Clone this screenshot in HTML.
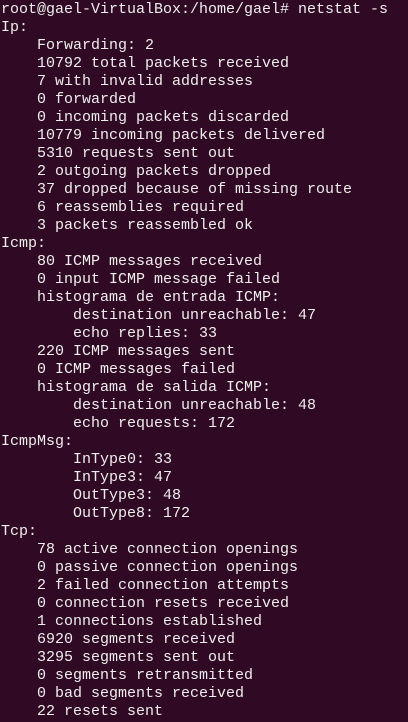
<!DOCTYPE html>
<html><head><style>
html,body{margin:0;padding:0;background:#300a24;width:408px;height:722px;overflow:hidden}
pre{margin:0;padding:1px 0 0 1px;font-family:"Liberation Mono","DejaVu Sans Mono",monospace;font-size:15px;line-height:18px;color:#eeeeec;}
</style></head><body><pre>root@gael-VirtualBox:/home/gael# netstat -s
Ip:
    Forwarding: 2
    10792 total packets received
    7 with invalid addresses
    0 forwarded
    0 incoming packets discarded
    10779 incoming packets delivered
    5310 requests sent out
    2 outgoing packets dropped
    37 dropped because of missing route
    6 reassemblies required
    3 packets reassembled ok
Icmp:
    80 ICMP messages received
    0 input ICMP message failed
    histograma de entrada ICMP:
        destination unreachable: 47
        echo replies: 33
    220 ICMP messages sent
    0 ICMP messages failed
    histograma de salida ICMP:
        destination unreachable: 48
        echo requests: 172
IcmpMsg:
        InType0: 33
        InType3: 47
        OutType3: 48
        OutType8: 172
Tcp:
    78 active connection openings
    0 passive connection openings
    2 failed connection attempts
    0 connection resets received
    1 connections established
    6920 segments received
    3295 segments sent out
    0 segments retransmitted
    0 bad segments received
    22 resets sent
</pre></body></html>
